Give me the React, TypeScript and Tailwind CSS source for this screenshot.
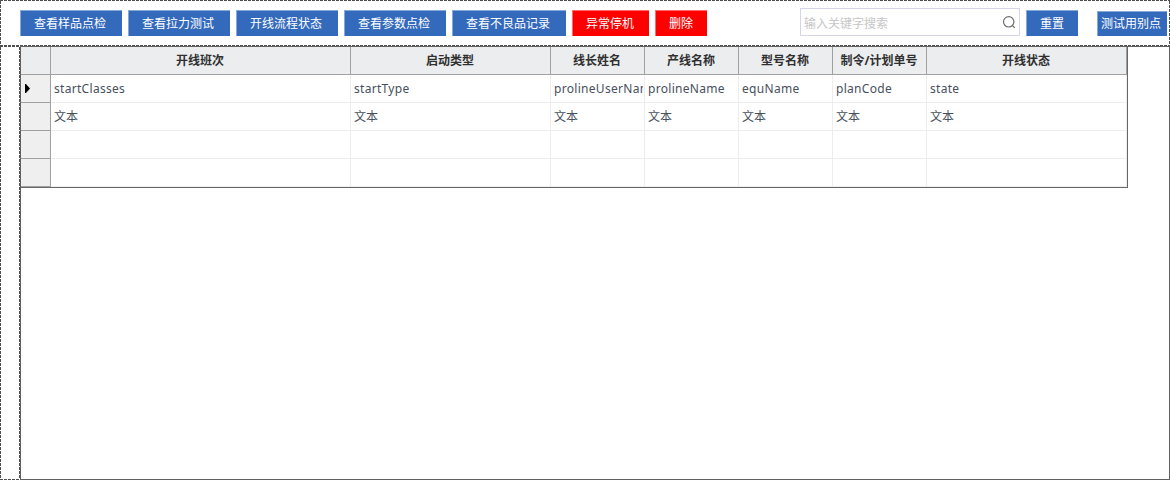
import type { ReactNode } from 'react';

const dashX = 'h-px shrink-0 bg-[repeating-linear-gradient(90deg,#505050_0_3px,#ffffff_3px_4px)]';
const dashY = 'w-px shrink-0 bg-[repeating-linear-gradient(180deg,#505050_0_3px,#ffffff_3px_4px)]';

const columns = [
  { title: '开线班次', field: 'startClasses' },
  { title: '启动类型', field: 'startType' },
  { title: '线长姓名', field: 'prolineUserName' },
  { title: '产线名称', field: 'prolineName' },
  { title: '型号名称', field: 'equName' },
  { title: '制令/计划单号', field: 'planCode' },
  { title: '开线状态', field: 'state' },
];

const rowGrid = 'grid grid-cols-[30px_300px_200px_94px_94px_94px_94px_200px] h-7';

function Button({ className, children }: { className: string; children: ReactNode }) {
  return (
    <button
      className={`flex shrink-0 items-center justify-center whitespace-nowrap border-l border-t text-xs leading-none text-white ${className}`}
    >
      {children}
    </button>
  );
}

const blue = 'border-[#86a9da] bg-[#346abc]';
const red = 'border-[#ff6b6b] bg-[#ff0000]';

function Toolbar() {
  return (
    <div className="flex h-11 items-start pl-[19px] pt-[9px]">
      <div className="flex gap-1.5">
        <Button className={`h-[26px] w-[102px] pr-[3px] ${blue}`}>查看样品点检</Button>
        <Button className={`h-[26px] w-[102px] pr-[3px] ${blue}`}>查看拉力测试</Button>
        <Button className={`h-[26px] w-[102px] pr-[3px] ${blue}`}>开线流程状态</Button>
        <Button className={`h-[26px] w-[102px] pr-[3px] ${blue}`}>查看参数点检</Button>
        <Button className={`h-[26px] w-[114px] pr-[3px] ${blue}`}>查看不良品记录</Button>
        <Button className={`h-[26px] w-[77px] pr-0.5 ${red}`}>异常停机</Button>
        <Button className={`h-[26px] w-[52px] pr-px ${red}`}>删除</Button>
      </div>
      <div className="-mt-0.5 ml-[93px] flex h-7 w-[220px] items-center justify-between border border-[#d5d5ea] pl-[3px] pr-[3px]">
        <span className="pt-[3px] text-xs leading-none text-[#c6c6c6]">输入关键字搜索</span>
        <svg width="14" height="14" viewBox="0 0 14 14" fill="none" stroke="#6e6e6e" strokeWidth="1.2">
          <circle cx="6.7" cy="6.8" r="5.2" />
          <path d="M10.4 10.5 L12.8 12.9" />
        </svg>
      </div>
      <Button className={`ml-1.5 h-[26px] w-[52px] pr-px ${blue}`}>重置</Button>
      <Button className={`ml-[19px] mt-px h-[25px] w-[70px] pr-[3px] ${blue}`}>测试用别点</Button>
    </div>
  );
}

function Row({ values, current }: { values: string[]; current?: boolean }) {
  return (
    <div className={rowGrid}>
      <div className="flex items-center border-b border-r border-[#a0a0a0] bg-[#efefef] pl-1">
        {current && (
          <svg width="5" height="9" viewBox="0 0 5 9" fill="#000">
            <path d="M0 0 L1 0 L5 4.5 L1 9 L0 9 Z" />
          </svg>
        )}
      </div>
      {values.map((value, i) => (
        <div
          key={i}
          className="flex items-center overflow-hidden whitespace-nowrap border-b border-r border-[#ededed] pl-[3px] pr-px text-xs text-[#48505c]"
        >
          <span className={`overflow-hidden ${current ? 'tracking-[0.3px]' : ''}`}>{value}</span>
        </div>
      ))}
    </div>
  );
}

function Table() {
  return (
    <div className="w-[1107px] border-b border-r border-[#686868]">
      <div className={rowGrid}>
        <div className="border-b border-r border-[#a0a0a0] bg-[#ebedef]" />
        {columns.map((column) => (
          <div
            key={column.title}
            className="flex items-center justify-center whitespace-nowrap border-b border-r border-[#a0a0a0] bg-[#ebedef] pr-px text-xs font-bold text-[#303030]"
          >
            {column.title}
          </div>
        ))}
      </div>
      <Row current values={columns.map((column) => column.field)} />
      <Row values={columns.map(() => '文本')} />
      <Row values={columns.map(() => '')} />
      <Row values={columns.map(() => '')} />
    </div>
  );
}

export default function App() {
  return (
    <div className="flex h-[480px] w-[1170px] flex-col overflow-hidden bg-white font-['Noto_Sans','Noto_Sans_CJK_SC',sans-serif]">
      <div className={dashX} />
      <div className="flex h-11 shrink-0">
        <div className={dashY} />
        <div className="flex-1">
          <Toolbar />
        </div>
        <div className={dashY} />
      </div>
      <div className={dashX} />
      <div className="flex min-h-0 flex-1">
        <div className="flex w-5 shrink-0 flex-col">
          <div className={dashX} />
          <div className="flex flex-1 justify-between">
            <div className={dashY} />
            <div className={dashY} />
          </div>
          <div className={dashX} />
        </div>
        <div className="flex-1 border border-[#606060]">
          <Table />
        </div>
      </div>
    </div>
  );
}
